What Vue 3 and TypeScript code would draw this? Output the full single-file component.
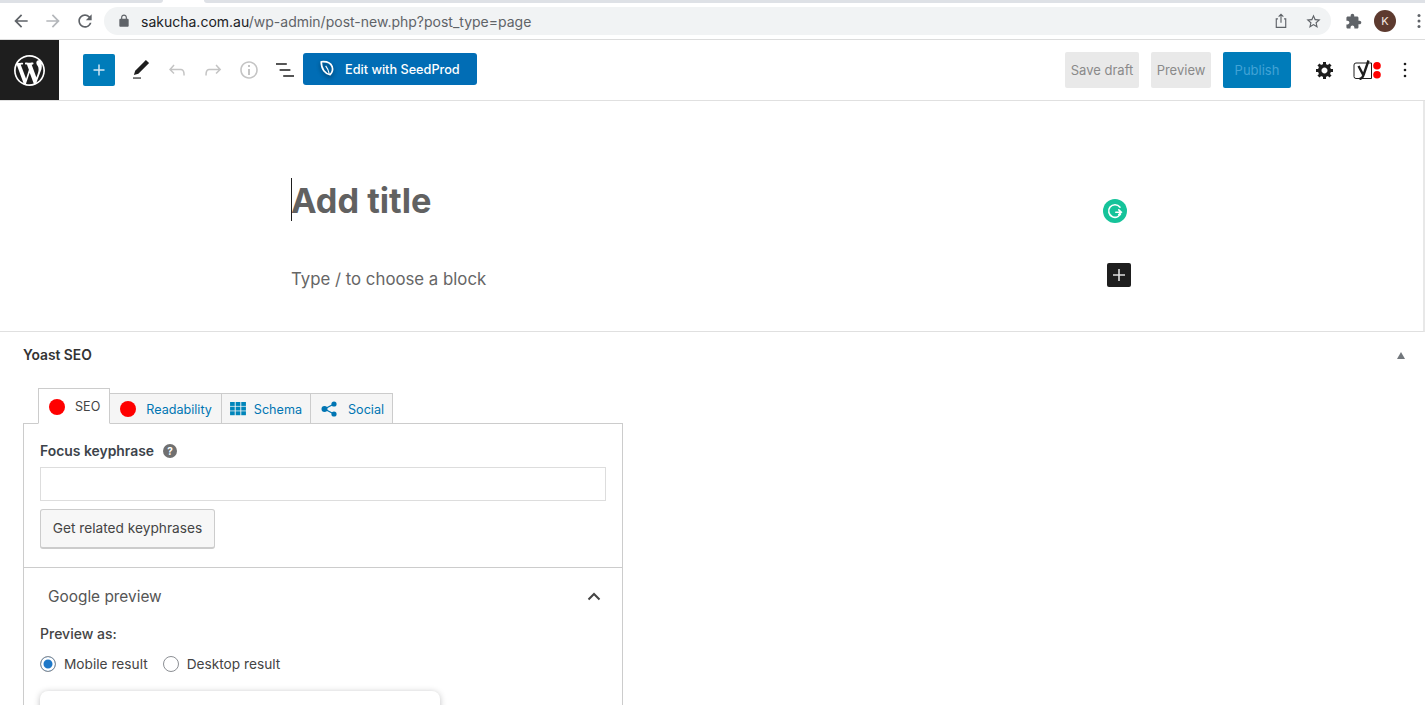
<script setup lang="ts">
const undoPath = 'M18.3 11.7c-.6-.6-1.4-.9-2.3-.9H6.7l2.9-3.3-1.1-1-4.5 5L8.5 16l1-1-2.7-2.7H16c.5 0 .9.2 1.3.5 1 1 1 3.4 1 4.5v.3h1.5v-.2c0-1.5 0-4.3-1.5-5.7z'
const redoPath = 'M15.6 6.5l-1.1 1 2.9 3.3H8c-.9 0-1.7.3-2.3.9-1.4 1.5-1.4 4.2-1.4 5.6v.2h1.5v-.3c0-1.1 0-3.5 1-4.5.3-.3.7-.5 1.3-.5h9.2L14.5 15l1.1 1.1 4.6-4.6-4.6-5z'
const infoPath = 'M12 3.2c-4.8 0-8.8 3.9-8.8 8.8 0 4.8 3.9 8.8 8.8 8.8 4.8 0 8.8-3.9 8.8-8.8 0-4.8-4-8.8-8.8-8.8zm0 16c-4 0-7.2-3.3-7.2-7.2C4.8 8 8 4.8 12 4.8s7.2 3.3 7.2 7.2c0 4-3.2 7.2-7.2 7.2zM11 17h2v-6h-2v6zm0-8h2V7h-2v2z'
const grid = [0, 6, 12].flatMap((y) => [0, 6, 12].map((x) => ({ x, y })))
</script>

<template>
  <div class="page">
    <div class="tabstrip">
      <span class="strip strip-left"></span>
      <span class="strip-gap"></span>
      <span class="strip strip-right"></span>
    </div>

    <header class="browser">
      <button class="nav-btn">
        <svg viewBox="0 0 24 24" width="20" height="20"><path fill="#5f6368" d="M20 11H7.83l5.59-5.59L12 4l-8 8 8 8 1.41-1.41L7.83 13H20v-2z" /></svg>
      </button>
      <button class="nav-btn">
        <svg viewBox="0 0 24 24" width="20" height="20"><path fill="#b4b7bb" d="M12 4l-1.41 1.41L16.17 11H4v2h12.17l-5.58 5.59L12 20l8-8z" /></svg>
      </button>
      <button class="nav-btn">
        <svg viewBox="0 0 24 24" width="20" height="20"><path fill="#5f6368" d="M17.65 6.35A7.958 7.958 0 0 0 12 4c-4.42 0-7.99 3.58-7.99 8s3.57 8 7.99 8c3.73 0 6.84-2.55 7.73-6h-2.08A5.99 5.99 0 0 1 12 18c-3.31 0-6-2.69-6-6s2.69-6 6-6c1.66 0 3.14.69 4.22 1.78L13 11h7V4l-2.35 2.35z" /></svg>
      </button>
      <div class="omnibox">
        <svg class="lock" viewBox="0 0 24 24" width="14" height="14"><path fill="#5f6368" d="M18 8h-1V6c0-2.76-2.24-5-5-5S7 3.24 7 6v2H6c-1.1 0-2 .9-2 2v10c0 1.1.9 2 2 2h12c1.1 0 2-.9 2-2V10c0-1.1-.9-2-2-2zM9 6c0-1.66 1.34-3 3-3s3 1.34 3 3v2H9V6z" /></svg>
        <span class="url"><span class="host">sakucha.com.au</span>/wp-admin/post-new.php?post_type=page</span>
        <svg class="share" viewBox="0 0 16 18" width="14" height="16"><path fill="none" stroke="#5f6368" stroke-width="1.3" d="M4.5 6.5H2.6v9.8h10.8V6.5h-1.9M8 11V1.5M5.3 4 8 1.3 10.7 4" /></svg>
        <svg class="star" viewBox="0 0 24 24" width="17" height="17"><path fill="#5f6368" d="M22 9.24l-7.19-.62L12 2 9.19 8.63 2 9.24l5.46 4.73L5.82 21 12 17.27 18.18 21l-1.63-7.03L22 9.24zM12 15.4l-3.76 2.27 1-4.28-3.32-2.88 4.38-.38L12 6.1l1.71 4.04 4.38.38-3.32 2.88 1 4.28L12 15.4z" /></svg>
      </div>
      <svg class="puzzle" viewBox="0 0 24 24" width="17" height="17"><path fill="#5f6368" d="M20.5 11H19V7c0-1.1-.9-2-2-2h-4V3.5C13 2.12 11.88 1 10.5 1S8 2.12 8 3.5V5H4c-1.1 0-1.99.9-1.99 2v3.8H3.5c1.49 0 2.7 1.21 2.7 2.7s-1.21 2.7-2.7 2.7H2V20c0 1.1.9 2 2 2h3.8v-1.5c0-1.49 1.21-2.7 2.7-2.7 1.49 0 2.7 1.21 2.7 2.7V22H17c1.1 0 2-.9 2-2v-4h1.5c1.38 0 2.5-1.12 2.5-2.5S21.88 11 20.5 11z" /></svg>
      <span class="avatar">K</span>
      <svg class="chrome-menu" viewBox="0 0 4 16" width="4" height="16"><circle cx="2" cy="2.5" r="1.5" fill="#5f6368" /><circle cx="2" cy="8" r="1.5" fill="#5f6368" /><circle cx="2" cy="13.5" r="1.5" fill="#5f6368" /></svg>
    </header>

    <div class="toolbar">
      <div class="wp-logo">
        <svg viewBox="0 0 20 20" width="31" height="31"><path fill="#fff" d="M20 10c0-5.51-4.49-10-10-10C4.48 0 0 4.49 0 10c0 5.52 4.48 10 10 10 5.51 0 10-4.48 10-10zM7.78 15.37L4.37 6.22c.55-.02 1.17-.08 1.17-.08.5-.06.44-1.13-.06-1.11 0 0-1.45.11-2.37.11-.18 0-.37 0-.58-.01C4.12 2.69 6.87 1.11 10 1.11c2.33 0 4.45.87 6.05 2.34-.68-.11-1.65.39-1.65 1.58 0 .74.45 1.36.9 2.1.35.61.55 1.36.55 2.46 0 1.49-1.4 5-1.4 5l-3.03-8.37c.54-.02.82-.17.82-.17.5-.05.44-1.25-.06-1.22 0 0-1.44.12-2.38.12-.87 0-2.33-.12-2.33-.12-.5-.03-.56 1.2-.06 1.22l.92.08 1.26 3.41zM17.41 10c.24-.64.74-1.87.43-4.25.7 1.29 1.05 2.71 1.05 4.25 0 3.29-1.73 6.24-4.4 7.78.97-2.59 1.94-5.2 2.92-7.78zM6.1 18.09C3.12 16.65 1.11 13.53 1.11 10c0-1.3.23-2.48.72-3.59C3.25 10.3 4.67 14.2 6.1 18.09zm4.03-6.63l2.58 6.98c-.86.29-1.76.45-2.71.45-.79 0-1.57-.11-2.29-.33.81-2.38 1.62-4.74 2.42-7.1z" /></svg>
      </div>
      <button class="add-btn">
        <svg viewBox="0 0 24 24" width="22" height="22"><path fill="#d5e8f5" d="M18 11.2h-5.2V6h-1.6v5.2H6v1.6h5.2V18h1.6v-5.2H18z" /></svg>
      </button>
      <svg class="tool tool-pen" viewBox="0 0 24 24" width="24" height="24"><path fill="#1e1e1e" d="M20.1 5.1L16.9 2 6.2 12.7l-1.3 4.4 4.5-1.3L20.1 5.1z" /><path fill="#555" d="M4 20.8h8v-1.5H4v1.5z" /></svg>
      <svg class="tool tool-undo" viewBox="0 0 24 24" width="24" height="24"><path fill="#c4c4c4" :d="undoPath" /></svg>
      <svg class="tool tool-redo" viewBox="0 0 24 24" width="24" height="24"><path fill="#c4c4c4" :d="redoPath" /></svg>
      <svg class="tool tool-info" viewBox="0 0 24 24" width="24" height="24"><path fill="#c4c4c4" :d="infoPath" /></svg>
      <svg class="tool tool-list" viewBox="0 0 24 24" width="24" height="24"><path fill="#1e1e1e" d="M13.8 5.2H3v1.5h10.8V5.2zm-3.6 12v1.5H21v-1.5H10.2zm7.2-6H6.6v1.5h10.8v-1.5z" /></svg>
      <button class="seedprod">
        <svg class="leaf" viewBox="0 0 18 18" width="16" height="16"><path fill="none" stroke="#fff" stroke-width="1.9" stroke-linejoin="round" d="M2.5 2C7.5 1.5 13 3 14.8 7.5C16 11 14.8 14 12.5 16.5C7 15.5 2.5 10.5 2.5 2z" /><path fill="none" stroke="#fff" stroke-width="1.3" d="M7.5 6.5C9.5 9 11 12 11.5 15.5" /></svg>
        Edit with SeedProd
      </button>
      <div class="spacer"></div>
      <button class="ghost save-draft">Save draft</button>
      <button class="ghost preview">Preview</button>
      <button class="publish">Publish</button>
      <svg class="cog" viewBox="0 0 20 20" width="20" height="20"><path fill="#1e1e1e" d="M18 12h-2.18c-.17.7-.44 1.35-.81 1.93l1.54 1.54-2.1 2.1-1.54-1.54c-.58.36-1.23.63-1.91.79V19H8v-2.18c-.68-.16-1.33-.43-1.91-.79l-1.54 1.54-2.12-2.12 1.54-1.54c-.36-.58-.63-1.23-.79-1.91H1V9.03h2.17c.16-.7.44-1.35.8-1.94L2.43 5.55l2.1-2.1 1.54 1.54c.58-.37 1.24-.64 1.93-.81V2h3v2.18c.68.16 1.33.43 1.91.79l1.54-1.54 2.12 2.12-1.54 1.54c.36.59.64 1.24.8 1.94H18V12zm-8.5 1.5c1.66 0 3-1.34 3-3s-1.34-3-3-3-3 1.34-3 3 1.34 3 3 3z" /></svg>
      <svg class="yoast" viewBox="0 0 30 20" width="30" height="20"><path fill="none" stroke="#1e1e1e" stroke-width="1" d="M3 3h15.5v15.5H3A2 2 0 0 1 1 16.5V5A2 2 0 0 1 3 3z" /><path fill="none" stroke="#1e1e1e" stroke-width="2.4" d="M5.5 6l4.5 8.5M15.5 .5 10.5 15c-.8 2.8-2 3.8-4 4" /><circle cx="24" cy="5.8" r="3.8" fill="#f00" /><circle cx="24" cy="14.8" r="3.8" fill="#f00" /></svg>
      <svg class="kebab" viewBox="0 0 4 16" width="4" height="16"><circle cx="2" cy="2" r="1.3" fill="#1e1e1e" /><circle cx="2" cy="8" r="1.3" fill="#1e1e1e" /><circle cx="2" cy="14" r="1.3" fill="#1e1e1e" /></svg>
    </div>

    <main class="canvas">
      <section class="editor">
        <div class="column">
          <div class="title-row">
            <span class="caret"></span>
            <h1 class="title">Add title</h1>
            <svg class="grammarly" viewBox="0 0 24 24" width="24" height="24"><circle cx="12" cy="12" r="12" fill="#15c39a" /><path fill="none" stroke="#fff" stroke-width="1.6" stroke-linecap="round" d="M17 8.2A6.3 6.3 0 1 0 18.2 13.2H12.8M15.8 10.8l2.5 2.4-2.5 2.4" /></svg>
          </div>
          <div class="block-row">
            <span class="block-hint">Type / to choose a block</span>
            <button class="inserter">
              <svg viewBox="0 0 24 24" width="24" height="24"><path fill="#ddd" d="M18 11.2h-5.2V6h-1.6v5.2H6v1.6h5.2V18h1.6v-5.2H18z" /></svg>
            </button>
          </div>
        </div>
      </section>

      <section class="yoast-box">
        <div class="yoast-head">
          <span class="yoast-title">Yoast SEO</span>
          <span class="triangle"></span>
        </div>

        <div class="tabs">
          <div class="tab tab-active">
            <span class="dot"></span><span>SEO</span>
          </div>
          <div class="tab tab-read">
            <span class="dot"></span><span>Readability</span>
          </div>
          <div class="tab tab-schema">
            <svg viewBox="0 0 17 15" width="16" height="14"><rect v-for="c in grid" :key="`${c.x}-${c.y}`" :x="c.x" :y="c.y * 0.83" width="5" height="4.2" fill="#0085ba" /></svg>
            <span>Schema</span>
          </div>
          <div class="tab tab-social">
            <svg viewBox="0 0 16 16" width="16" height="16"><path fill="none" stroke="#0075b3" stroke-width="1.3" d="M13 3 3.5 8l9.5 5" /><circle cx="3.5" cy="8" r="3" fill="#0075b3" /><circle cx="13" cy="3" r="2.6" fill="#0075b3" /><circle cx="13" cy="13" r="2.6" fill="#0075b3" /></svg>
            <span>Social</span>
          </div>
        </div>

        <div class="panel">
          <div class="focus">
            <div class="focus-label">
              <label>Focus keyphrase</label>
              <span class="help">?</span>
            </div>
            <input class="focus-input" type="text" />
            <button class="related">Get related keyphrases</button>
          </div>
          <div class="google">
            <div class="google-head">
              <span>Google preview</span>
              <svg viewBox="0 0 14 9" width="14" height="9"><path fill="none" stroke="#444" stroke-width="2" d="M1.5 7.5 7 2l5.5 5.5" /></svg>
            </div>
            <div class="preview-as">Preview as:</div>
            <div class="radios">
              <span class="radio radio-on"></span><span class="radio-label">Mobile result</span>
              <span class="radio radio-second"></span><span class="radio-label">Desktop result</span>
            </div>
            <div class="serp-card"></div>
          </div>
        </div>
      </section>
    </main>
  </div>
</template>

<style>
html, body { margin: 0; background: #fff; overflow: hidden; }
</style>

<style scoped>
.page {
  width: 1425px;
  height: 705px;
  overflow: hidden;
  font-family: Inter, "Liberation Sans", sans-serif;
  color: #1e1e1e;
  background: #fff;
}
button { font-family: inherit; padding: 0; border: 0; background: none; }

.tabstrip { display: flex; height: 3px; }
.strip { background: #dee1e6; }
.strip-left { width: 163px; border-bottom-right-radius: 3px; }
.strip-gap { width: 41px; background: #fff; }
.strip-right { flex: 1; border-bottom-left-radius: 3px; }

.browser {
  height: 36px;
  border-bottom: 1px solid #dcdcdc;
  display: flex;
  align-items: center;
  padding-left: 11px;
}
.nav-btn { width: 20px; height: 20px; margin-right: 12px; display: flex; }
.nav-btn:nth-child(3) { margin-right: 9px; }
.omnibox {
  width: 1227px;
  height: 28px;
  border-radius: 14px;
  background: #f1f3f4;
  display: flex;
  align-items: center;
  padding-left: 13px;
  box-sizing: border-box;
}
.lock { margin-right: 10px; }
.url { font-size: 14px; color: #5f6368; flex: 1; }
.host { color: #202124; }
.share { margin-right: 17px; }
.star { margin-right: 9px; }
.puzzle { margin-left: 14px; }
.avatar {
  margin-left: 12px;
  width: 22px;
  height: 22px;
  border-radius: 50%;
  background: #5d3a2f;
  color: #f3e6e0;
  font-size: 11px;
  display: flex;
  align-items: center;
  justify-content: center;
}
.chrome-menu { margin-left: 21px; }

.toolbar {
  height: 60px;
  border-bottom: 1px solid #e0e0e0;
  display: flex;
  align-items: center;
}
.wp-logo {
  width: 59px;
  height: 60px;
  background: #1e1e1e;
  display: flex;
  align-items: center;
  justify-content: center;
}
.add-btn {
  margin-left: 24px;
  width: 32px;
  height: 32px;
  margin-top: -1px;
  background: #007cba;
  border-radius: 2px;
  display: flex;
  align-items: center;
  justify-content: center;
}
.tool { margin-top: -1px; }
.tool-pen { margin-left: 14px; margin-top: 0; }
.tool-undo { margin-left: 12px; }
.tool-redo { margin-left: 12px; }
.tool-info { margin-left: 12px; }
.tool-list { margin-left: 12px; }
.seedprod {
  margin-left: 6px;
  margin-top: -3px;
  width: 174px;
  height: 32px;
  background: #016db5;
  border-radius: 3px;
  color: #fff;
  font-size: 12.7px;
  font-weight: 500;
  display: flex;
  align-items: center;
  padding: 1px 0 0 16px;
  box-sizing: border-box;
}
.leaf { margin-right: 10px; margin-top: -3px; filter: drop-shadow(0 2px 2px rgba(0,0,0,.45)); }
.spacer { flex: 1; }
.ghost {
  height: 36px;
  background: #e9e9e9;
  color: #8a8a8a;
  font-size: 13px;
  border-radius: 2px;
}
.save-draft { width: 74px; margin-right: 12px; }
.preview { width: 60px; margin-right: 12px; }
.publish {
  width: 68px;
  height: 36px;
  background: #007cba;
  color: #42a3d6;
  font-size: 13px;
  border-radius: 2px;
  margin-right: 24px;
}
.cog { margin-right: 18px; }
.yoast { margin-right: 20px; }
.kebab { margin-right: 18px; }

.canvas { display: block; }
.editor {
  height: 230px;
  border-bottom: 1px solid #e0e0e0;
  border-right: 2px solid #e8e8e8;
  display: flex;
  justify-content: center;
}
.column { width: 840px; padding-top: 78px; margin-left: -1px; }
.title-row { position: relative; height: 44px; }
.caret {
  position: absolute;
  left: 0;
  top: -1px;
  width: 1px;
  height: 43px;
  background: #1e1e1e;
}
.title {
  margin: 0;
  font-size: 34.3px;
  line-height: 44px;
  font-weight: 700;
  color: #616161;
}
.grammarly { position: absolute; left: 812px; top: 20px; }
.block-row {
  margin-top: 40px;
  display: flex;
  justify-content: space-between;
  align-items: center;
  height: 24px;
}
.block-hint { font-size: 16.8px; color: #666; margin-top: 8px; }
.inserter { width: 24px; height: 24px; background: #1e1e1e; border-radius: 2px; display: flex; }

.yoast-box { padding: 0 23px; }
.yoast-head {
  height: 46px;
  display: flex;
  align-items: center;
  justify-content: space-between;
}
.yoast-title { font-size: 13.8px; font-weight: 600; color: #333; }
.triangle {
  width: 0;
  height: 0;
  margin-right: -3px;
  border-left: 4px solid transparent;
  border-right: 4px solid transparent;
  border-bottom: 7px solid #72777c;
}
.tabs {
  display: flex;
  align-items: flex-end;
  margin-top: 10px;
  margin-left: 15px;
  height: 36px;
  position: relative;
  z-index: 1;
  margin-bottom: -1px;
}
.tab {
  height: 28px;
  display: flex;
  align-items: center;
  gap: 10px;
  background: #f5f5f5;
  border: 1px solid #ccc;
  border-left: 0;
  font-size: 12.6px;
  color: #0075b3;
}
.tab-active {
  height: 33px;
  background: #fff;
  border: 1px solid #ccc;
  border-bottom-color: #fff;
  color: #444;
  padding: 1px 9px 0 10px;
}
.tab-read { padding: 1px 9px 0 10px; }
.tab-schema { padding: 1px 8px 0 8px; gap: 8px; }
.tab-social { padding: 1px 8px 0 10px; gap: 11px; }
.dot { width: 16px; height: 16px; border-radius: 50%; background: #f00; }
.panel {
  width: 600px;
  box-sizing: border-box;
  border: 1px solid #ccc;
  border-bottom: 0;
}
.focus { padding: 17px 16px 18px; border-bottom: 1px solid #ccc; }
.focus-label { display: flex; align-items: center; gap: 9px; height: 20px; }
.focus-label label { font-size: 13.9px; font-weight: 600; color: #3c434a; }
.help {
  width: 14px;
  height: 14px;
  border-radius: 50%;
  background: #707070;
  color: #fff;
  font-size: 10px;
  font-weight: 700;
  display: flex;
  align-items: center;
  justify-content: center;
}
.focus-input {
  display: block;
  width: 100%;
  height: 34px;
  margin-top: 6px;
  box-sizing: border-box;
  border: 1px solid #ddd;
  background: #fff;
}
.related {
  display: block;
  margin-top: 8px;
  width: 175px;
  height: 40px;
  padding-bottom: 2px;
  border: 1px solid #ccc;
  border-bottom-width: 2px;
  border-radius: 3px;
  background: #f7f7f7;
  font-size: 13.7px;
  color: #444;
}
.google { padding: 0 16px; }
.google-head {
  height: 56px;
  display: flex;
  align-items: center;
  justify-content: space-between;
  padding: 0 5px 0 8px;
  font-size: 15.4px;
  color: #555;
}
.preview-as { font-size: 14px; font-weight: 500; color: #444; line-height: 20px; }
.radios { display: flex; align-items: center; margin-top: 10px; height: 20px; }
.radio {
  width: 14px;
  height: 14px;
  border: 1px solid #8c8f94;
  border-radius: 50%;
  background: #fff;
}
.radio-on { background: #1e78c8; box-shadow: inset 0 0 0 2.5px #fff; }
.radio-second { margin-left: 15px; }
.radio-label { margin-left: 8px; font-size: 13.7px; color: #444; }
.serp-card {
  margin-top: 17px;
  width: 400px;
  height: 60px;
  border-radius: 8px;
  background: #fff;
  box-shadow: 0 1px 6px rgba(32, 33, 36, .28);
}
</style>
